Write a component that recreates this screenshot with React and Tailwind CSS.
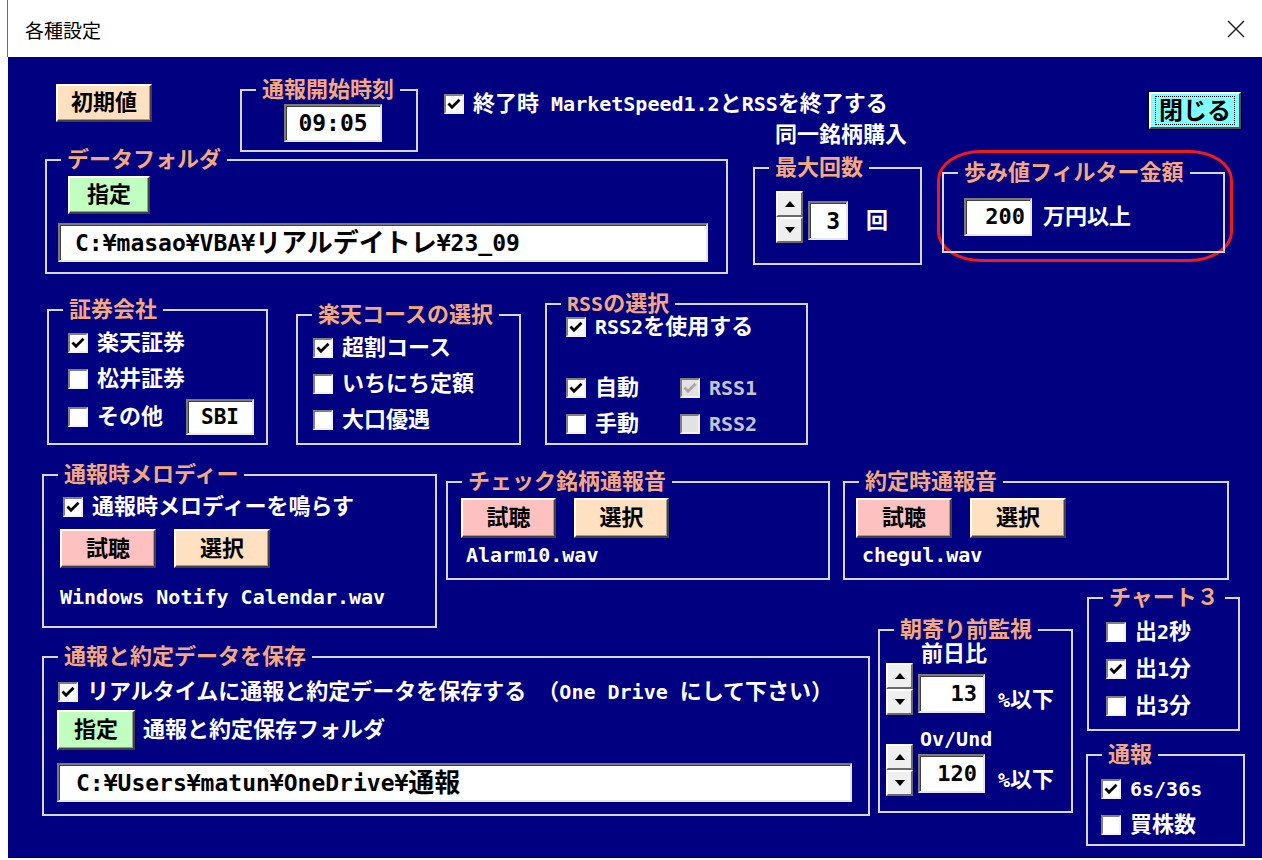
import React from 'react'

const CJK = /([\u3000-\u30ff\u4e00-\u9fff\uff00-\uffef]+)/

// CJK glyphs stay full size, latin runs get a smaller mono size so they keep the half-width look
function Mix({ text, latin = 'text-[20px]' }) {
  return text
    .split(CJK)
    .filter(Boolean)
    .map((p, i) =>
      CJK.test(p) ? <span key={i}>{p}</span> : <span key={i} className={latin}>{p}</span>
    )
}

function Group({ title, className = '', children }) {
  return (
    <fieldset className={`shrink-0 border-2 border-[#d6d6de] ${className}`}>
      <legend className="ml-[14px] px-[6px] leading-[22px] text-[#f3a87e]">
        <Mix text={title} />
      </legend>
      {children}
    </fieldset>
  )
}

function Check({ checked, disabled }) {
  return (
    <span
      className={`w-[20px] h-[20px] shrink-0 flex items-center justify-center border-2 border-t-[#808080] border-l-[#808080] border-r-[#f2f2f2] border-b-[#f2f2f2] ${
        disabled ? 'bg-[#e2e2e2]' : 'bg-white'
      }`}
    >
      {checked && (
        <svg width="14" height="12" viewBox="0 0 14 12">
          <path
            d="M1.5 5.6 L5 9.2 L12.5 1.8"
            fill="none"
            stroke={disabled ? '#a8a8a8' : '#000'}
            strokeWidth="2.8"
          />
        </svg>
      )}
    </span>
  )
}

function CheckRow({ label, checked, disabled, className = '' }) {
  return (
    <div className={`flex items-center gap-[9px] h-[22px] ${className}`}>
      <Check checked={checked} disabled={disabled} />
      <span className={`whitespace-pre ${disabled ? 'text-[#c4c4cc]' : 'text-white'}`}>
        <Mix text={label} />
      </span>
    </div>
  )
}

function Btn({ label, color, className = '' }) {
  return (
    <div
      className={`shrink-0 flex items-center justify-center text-black border-2 border-t-white border-l-white border-r-[#404040] border-b-[#404040] shadow-[inset_-1px_-1px_0_#9a9a9a] ${color} ${className}`}
    >
      {label}
    </div>
  )
}

function Field({ children, className = '' }) {
  return (
    <div
      className={`shrink-0 flex items-center bg-white text-black border-2 border-t-[#7a7a7a] border-l-[#7a7a7a] border-r-[#e8e8e8] border-b-[#e8e8e8] shadow-[inset_1px_1px_0_#404040] ${className}`}
    >
      {children}
    </div>
  )
}

function Arrow({ up }) {
  return (
    <div className="h-[26px] flex items-center justify-center bg-[#efefef] border-2 border-t-white border-l-white border-r-[#6a6a6a] border-b-[#6a6a6a]">
      <svg width="10" height="6" viewBox="0 0 10 6">
        <polygon points={up ? '0,6 5,0 10,6' : '0,0 10,0 5,6'} fill="#000" />
      </svg>
    </div>
  )
}

function Spin({ className = '' }) {
  return (
    <div className={`shrink-0 flex flex-col w-[27px] ${className}`}>
      <Arrow up />
      <Arrow />
    </div>
  )
}

export default function App() {
  return (
    <div className="w-[1262px] h-[860px] bg-white overflow-hidden">
      {/* title bar */}
      <div className="h-[57px] ml-[7px] border-l border-[#6c6c6c] flex items-center justify-between font-['Noto_Sans_CJK_JP',sans-serif]">
        <span className="ml-[17px] pt-[4px] text-[19px] text-black">各種設定</span>
        <svg width="18" height="18" viewBox="0 0 18 18" className="mr-[17px]">
          <path d="M1 1 L17 17 M17 1 L1 17" stroke="#1a1a1a" strokeWidth="1.4" />
        </svg>
      </div>

      {/* client */}
      <div className="ml-[8px] h-[801px] bg-[#000080] text-white text-[22px] leading-[22px] font-bold font-['DejaVu_Sans_Mono','Noto_Sans_CJK_JP',monospace]">
        {/* row 1 */}
        <div className="flex items-start h-[92px]">
          <Btn label="初期値" color="bg-[#ffe0c0]" className="ml-[48px] mt-[27px] w-[96px] h-[38px]" />

          <Group title="通報開始時刻" className="ml-[88px] mt-[22px] w-[178px] h-[73px]">
            <Field className="ml-[42px] mt-[3px] w-[98px] h-[38px] justify-center">
              <span className="text-[23px]">09:05</span>
            </Field>
          </Group>

          <div className="ml-[26px] mt-[36px] flex flex-col">
            <CheckRow checked label="終了時 MarketSpeed1.2とRSSを終了する" />
            <div className="ml-[331px] mt-[9px]">同一銘柄購入</div>
          </div>

          <div className="ml-auto mr-[20px] mt-[34px] w-[94px] h-[39px] border border-black">
            <div className="h-full flex items-center justify-center bg-[#80ffff] text-black text-[24px] border-2 border-t-white border-l-white border-r-[#505050] border-b-[#505050]">
              <div className="px-[3px] h-[29px] flex items-center border border-dotted border-black">
                閉じる
              </div>
            </div>
          </div>
        </div>

        {/* row 2 */}
        <div className="flex items-start h-[141px]">
          <Group title="データフォルダ" className="ml-[37px] w-[683px] h-[125px]">
            <Btn label="指定" color="bg-[#c0ffc0]" className="ml-[21px] mt-[5px] w-[82px] h-[38px]" />
            <Field className="ml-[11px] mt-[9px] w-[650px] h-[39px] pl-[15px] text-[26px]">
              <Mix text="C:¥masao¥VBA¥リアルデイトレ¥23_09" latin="text-[23px]" />
            </Field>
          </Group>

          <Group title="最大回数" className="ml-[25px] mt-[8px] w-[169px] h-[108px]">
            <div className="flex items-start">
              <Spin className="ml-[21px] mt-[12px]" />
              <Field className="ml-[5px] mt-[22px] w-[40px] h-[39px] justify-end pr-[6px]">
                <span className="text-[23px]">3</span>
              </Field>
              <span className="ml-[18px] mt-[31px]">回</span>
            </div>
          </Group>

          <div className="shrink-0 ml-[15px] mt-[1px] w-[296px] h-[112px] border-[3px] border-[#f01a1a] rounded-[44px_/_30px]">
            <Group title="歩み値フィルター金額" className="ml-[2px] mt-[9px] w-[283px] h-[91px]">
              <div className="flex items-start">
                <Field className="ml-[20px] mt-[14px] w-[68px] h-[38px] justify-end pr-[5px]">
                  <span className="text-[22px]">200</span>
                </Field>
                <span className="ml-[11px] mt-[22px]">万円以上</span>
              </div>
            </Group>
          </div>
        </div>

        {/* row 3 */}
        <div className="flex items-start h-[170px]">
          <Group title="証券会社" className="ml-[39px] mt-[9px] w-[221px] h-[146px]">
            <div className="pl-[19px] pt-[11px] flex flex-col">
              <CheckRow checked label="楽天証券" />
              <CheckRow label="松井証券" className="mt-[14px]" />
              <div className="mt-[9px] flex items-center">
                <CheckRow label="その他" />
                <Field className="ml-[23px] w-[68px] h-[36px] justify-center">
                  <span className="text-[21px]">SBI</span>
                </Field>
              </div>
            </div>
          </Group>

          <Group title="楽天コースの選択" className="ml-[28px] mt-[14px] w-[225px] h-[141px]">
            <div className="pl-[15px] pt-[11px] flex flex-col gap-[14px]">
              <CheckRow checked label="超割コース" />
              <CheckRow label="いちにち定額" />
              <CheckRow label="大口優遇" />
            </div>
          </Group>

          <Group title="RSSの選択" className="ml-[24px] mt-[3px] w-[263px] h-[152px]">
            <div className="pl-[19px] pt-[1px]">
              <CheckRow checked label="RSS2を使用する" />
              <div className="mt-[39px] grid grid-cols-[114px_auto] gap-y-[14px]">
                <CheckRow checked label="自動" />
                <CheckRow checked disabled label="RSS1" />
                <CheckRow label="手動" />
                <CheckRow disabled label="RSS2" />
              </div>
            </div>
          </Group>
        </div>

        {/* row 4 */}
        <div className="flex items-start h-[127px]">
          <Group title="通報時メロディー" className="ml-[34px] mt-[4px] w-[395px] h-[164px]">
            <CheckRow checked label="通報時メロディーを鳴らす" className="ml-[19px] mt-[10px]" />
            <div className="ml-[16px] mt-[11px] flex gap-[18px]">
              <Btn label="試聴" color="bg-[#ffc0c0]" className="w-[96px] h-[39px]" />
              <Btn label="選択" color="bg-[#ffe0c0]" className="w-[96px] h-[39px]" />
            </div>
            <div className="ml-[16px] mt-[18px] text-[20px]">Windows Notify Calendar.wav</div>
          </Group>

          <Group title="チェック銘柄通報音" className="ml-[9px] mt-[11px] w-[384px] h-[109px]">
            <div className="ml-[13px] mt-[5px] flex gap-[18px]">
              <Btn label="試聴" color="bg-[#ffc0c0]" className="w-[95px] h-[40px]" />
              <Btn label="選択" color="bg-[#ffe0c0]" className="w-[95px] h-[40px]" />
            </div>
            <div className="ml-[18px] mt-[6px] text-[20px]">Alarm10.wav</div>
          </Group>

          <Group title="約定時通報音" className="ml-[13px] mt-[11px] w-[386px] h-[109px]">
            <div className="ml-[11px] mt-[5px] flex gap-[18px]">
              <Btn label="試聴" color="bg-[#ffc0c0]" className="w-[96px] h-[40px]" />
              <Btn label="選択" color="bg-[#ffe0c0]" className="w-[96px] h-[40px]" />
            </div>
            <div className="ml-[17px] mt-[6px] text-[20px]">chegul.wav</div>
          </Group>
        </div>

        {/* row 5 */}
        <div className="flex items-start">
          <Group title="通報と約定データを保存" className="ml-[34px] mt-[59px] w-[828px] h-[170px]">
            <CheckRow
              checked
              label="リアルタイムに通報と約定データを保存する　（One Drive にして下さい）"
              className="ml-[14px] mt-[13px]"
            />
            <div className="ml-[13px] mt-[7px] flex items-center">
              <Btn label="指定" color="bg-[#c0ffc0]" className="w-[78px] h-[40px]" />
              <span className="ml-[8px]">通報と約定保存フォルダ</span>
            </div>
            <Field className="ml-[13px] mt-[13px] w-[795px] h-[39px] pl-[17px] text-[26px]">
              <Mix text="C:¥Users¥matun¥OneDrive¥通報" latin="text-[23px]" />
            </Field>
          </Group>

          <Group title="朝寄り前監視" className="ml-[8px] mt-[32px] w-[195px] h-[194px]">
            <div className="ml-[41px] mt-[3px] leading-[19px]">前日比</div>
            <div className="ml-[6px] flex items-start">
              <Spin />
              <Field className="ml-[5px] mt-[11px] w-[67px] h-[39px] justify-end pr-[6px]">
                <span className="text-[22px]">13</span>
              </Field>
              <span className="ml-[13px] mt-[26px]">
                <Mix text="%以下" />
              </span>
            </div>
            <div className="ml-[40px] mt-[15px] leading-[19px] text-[20px]">Ov/Und</div>
            <div className="ml-[6px] -mt-[5px] flex items-start">
              <Spin />
              <Field className="ml-[5px] mt-[10px] w-[67px] h-[39px] justify-end pr-[6px]">
                <span className="text-[22px]">120</span>
              </Field>
              <span className="ml-[13px] mt-[25px]">
                <Mix text="%以下" />
              </span>
            </div>
          </Group>

          <div className="ml-[13px] flex flex-col">
            <Group title="チャート３" className="ml-[1px] w-[153px] h-[144px]">
              <div className="pl-[17px] pt-[12px] flex flex-col gap-[15px]">
                <CheckRow label="出2秒" />
                <CheckRow checked label="出1分" />
                <CheckRow label="出3分" />
              </div>
            </Group>
            <Group title="通報" className="mt-[13px] w-[159px] h-[102px]">
              <div className="pl-[13px] pt-[12px] flex flex-col gap-[14px]">
                <CheckRow checked label="6s/36s" />
                <CheckRow label="買株数" />
              </div>
            </Group>
          </div>
        </div>
      </div>
    </div>
  )
}
